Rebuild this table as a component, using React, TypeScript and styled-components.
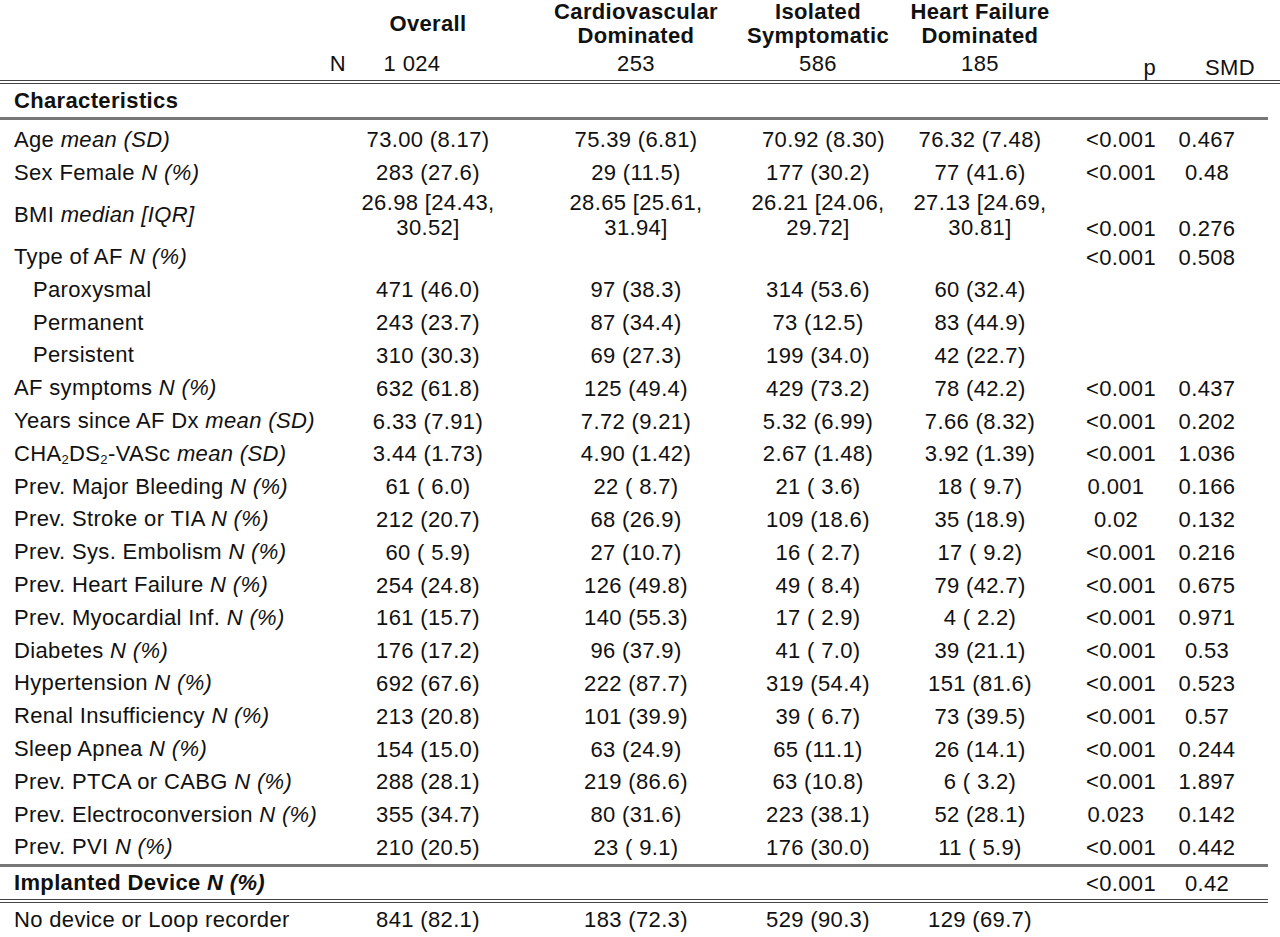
import React from 'react'
import styled, { createGlobalStyle } from 'styled-components'

const GlobalStyle = createGlobalStyle`
    html, body {
        margin: 0;
        padding: 0;
        background: #fff;
    }
`;

const BODY_COLS = '346px 164px 252px 112px 212px 60px 122px';
const HEAD_COLS = '346px 164px 252px 112px 212px 94px 100px';

const Page = styled.div`
    width: 1280px;
    font-family: "Liberation Sans", Arial, sans-serif;
    font-size: 22px;
    letter-spacing: 0.35px;
    color: #111;
`;

const Head = styled.header`
    border-bottom: 4px double #444;
`;

const TitleRow = styled.div`
    display: grid;
    grid-template-columns: ${HEAD_COLS};
    height: 48px;
`;

const Title = styled.div`
    display: flex;
    align-items: center;
    justify-content: center;
    text-align: center;
    font-weight: bold;
    line-height: 24px;
`;

const CountRow = styled.div`
    display: grid;
    grid-template-columns: ${HEAD_COLS};
    height: 32px;
    line-height: 32px;
`;

const Count = styled.div<{ $align?: string; $pad?: string; $low?: boolean }>`
    text-align: ${(p) => p.$align ?? 'center'};
    padding: ${(p) => p.$pad ?? '0'};
    transform: translateY(${(p) => (p.$low ? '4px' : '0')});
`;

const Section = styled.div<{ $double?: boolean; $w?: number }>`
    width: ${(p) => p.$w ?? 1268}px;
    border-bottom: ${(p) => (p.$double ? '4px double #444' : '3px solid #777')};
`;

const Body = styled.div`
    width: 1268px;
    padding-top: 3.6px;
    border-bottom: 3px solid #777;
`;

const Row = styled.div<{ $h?: number }>`
    display: grid;
    grid-template-columns: ${BODY_COLS};
    height: ${(p) => p.$h ?? 32.8}px;
    align-items: center;
    white-space: pre;
`;

const Label = styled.div<{ $indent?: boolean; $bold?: boolean }>`
    padding-left: ${(p) => (p.$indent ? 33 : 14)}px;
    font-weight: ${(p) => (p.$bold ? 'bold' : 'normal')};
`;

const Cell = styled.div<{ $bottom?: boolean }>`
    text-align: center;
    line-height: 25px;
    align-self: ${(p) => (p.$bottom ? 'end' : 'center')};
    padding-bottom: ${(p) => (p.$bottom ? 0 : 0)}px;
`;

const Stack = styled.div`
    display: flex;
    flex-direction: column;
    align-items: center;
    line-height: 25px;
`;

const I = styled.i`
    font-style: italic;
`;

const Sub = styled.sub`
    font-size: 13px;
    vertical-align: -3px;
    line-height: 0;
`;

type Line = {
    label: React.ReactNode
    indent?: boolean
    v?: (string | string[])[]
    p?: string
    smd?: string
}

const n = <I>N (%)</I>;

const lines: Line[] = [
    { label: <>Age <I>mean (SD)</I></>, v: ['73.00 (8.17)', '75.39 (6.81)', '70.92 (8.30)', '76.32 (7.48)'], p: '<0.001', smd: '0.467' },
    { label: <>Sex Female {n}</>, v: ['283 (27.6)', '29 (11.5)', '177 (30.2)', '77 (41.6)'], p: '<0.001', smd: '0.48' },
    {
        label: <>BMI <I>median [IQR]</I></>,
        v: [['26.98 [24.43,', '30.52]'], ['28.65 [25.61,', '31.94]'], ['26.21 [24.06,', '29.72]'], ['27.13 [24.69,', '30.81]']],
        p: '<0.001', smd: '0.276',
    },
    { label: <>Type of AF {n}</>, p: '<0.001', smd: '0.508' },
    { label: 'Paroxysmal', indent: true, v: ['471 (46.0)', '97 (38.3)', '314 (53.6)', '60 (32.4)'] },
    { label: 'Permanent', indent: true, v: ['243 (23.7)', '87 (34.4)', '73 (12.5)', '83 (44.9)'] },
    { label: 'Persistent', indent: true, v: ['310 (30.3)', '69 (27.3)', '199 (34.0)', '42 (22.7)'] },
    { label: <>AF symptoms {n}</>, v: ['632 (61.8)', '125 (49.4)', '429 (73.2)', '78 (42.2)'], p: '<0.001', smd: '0.437' },
    { label: <>Years since AF Dx <I>mean (SD)</I></>, v: ['6.33 (7.91)', '7.72 (9.21)', '5.32 (6.99)', '7.66 (8.32)'], p: '<0.001', smd: '0.202' },
    { label: <>CHA<Sub>2</Sub>DS<Sub>2</Sub>-VASc <I>mean (SD)</I></>, v: ['3.44 (1.73)', '4.90 (1.42)', '2.67 (1.48)', '3.92 (1.39)'], p: '<0.001', smd: '1.036' },
    { label: <>Prev. Major Bleeding {n}</>, v: ['61 ( 6.0)', '22 ( 8.7)', '21 ( 3.6)', '18 ( 9.7)'], p: '0.001', smd: '0.166' },
    { label: <>Prev. Stroke or TIA {n}</>, v: ['212 (20.7)', '68 (26.9)', '109 (18.6)', '35 (18.9)'], p: '0.02', smd: '0.132' },
    { label: <>Prev. Sys. Embolism {n}</>, v: ['60 ( 5.9)', '27 (10.7)', '16 ( 2.7)', '17 ( 9.2)'], p: '<0.001', smd: '0.216' },
    { label: <>Prev. Heart Failure {n}</>, v: ['254 (24.8)', '126 (49.8)', '49 ( 8.4)', '79 (42.7)'], p: '<0.001', smd: '0.675' },
    { label: <>Prev. Myocardial Inf. {n}</>, v: ['161 (15.7)', '140 (55.3)', '17 ( 2.9)', '4 ( 2.2)'], p: '<0.001', smd: '0.971' },
    { label: <>Diabetes {n}</>, v: ['176 (17.2)', '96 (37.9)', '41 ( 7.0)', '39 (21.1)'], p: '<0.001', smd: '0.53' },
    { label: <>Hypertension {n}</>, v: ['692 (67.6)', '222 (87.7)', '319 (54.4)', '151 (81.6)'], p: '<0.001', smd: '0.523' },
    { label: <>Renal Insufficiency {n}</>, v: ['213 (20.8)', '101 (39.9)', '39 ( 6.7)', '73 (39.5)'], p: '<0.001', smd: '0.57' },
    { label: <>Sleep Apnea {n}</>, v: ['154 (15.0)', '63 (24.9)', '65 (11.1)', '26 (14.1)'], p: '<0.001', smd: '0.244' },
    { label: <>Prev. PTCA or CABG {n}</>, v: ['288 (28.1)', '219 (86.6)', '63 (10.8)', '6 ( 3.2)'], p: '<0.001', smd: '1.897' },
    { label: <>Prev. Electroconversion {n}</>, v: ['355 (34.7)', '80 (31.6)', '223 (38.1)', '52 (28.1)'], p: '0.023', smd: '0.142' },
    { label: <>Prev. PVI {n}</>, v: ['210 (20.5)', '23 ( 9.1)', '176 (30.0)', '11 ( 5.9)'], p: '<0.001', smd: '0.442' },
];

const DataRow = ({ line }: { line: Line }) => {
    const tall = (line.v ?? []).some((x) => Array.isArray(x));
    const vals = line.v ?? ['', '', '', ''];
    return (
        <Row $h={tall ? 51.5 : undefined}>
            <Label $indent={line.indent}>{line.label}</Label>
            {vals.map((x, i) =>
                Array.isArray(x) ? (
                    <Stack key={i}>
                        {x.map((s) => <span key={s}>{s}</span>)}
                    </Stack>
                ) : (
                    <Cell key={i}>{x}</Cell>
                )
            )}
            <Cell $bottom={tall}>{line.p ?? ''}</Cell>
            <Cell $bottom={tall}>{line.smd ?? ''}</Cell>
        </Row>
    );
};

const App = () => {
    return (
        <Page>
            <GlobalStyle />
            <Head>
                <TitleRow>
                    <div />
                    <Title>Overall</Title>
                    <Title>Cardiovascular<br />Dominated</Title>
                    <Title>Isolated<br />Symptomatic</Title>
                    <Title>Heart Failure<br />Dominated</Title>
                </TitleRow>
                <CountRow>
                    <Count $align="right">N</Count>
                    <Count $pad="0 32px 0 0">1 024</Count>
                    <Count>253</Count>
                    <Count>586</Count>
                    <Count>185</Count>
                    <Count $align="right" $pad="0 24px 0 0" $low>p</Count>
                    <Count $low>SMD</Count>
                </CountRow>
            </Head>
            <Section>
                <Row $h={33}>
                    <Label $bold>Characteristics</Label>
                </Row>
            </Section>
            <Body>
                {lines.map((line, i) => <DataRow key={i} line={line} />)}
            </Body>
            <Section $double>
                <Row $h={32.5}>
                    <Label $bold>Implanted Device <I>N (%)</I></Label>
                    <Cell />
                    <Cell />
                    <Cell />
                    <Cell />
                    <Cell>&lt;0.001</Cell>
                    <Cell>0.42</Cell>
                </Row>
            </Section>
            <Row>
                <Label>No device or Loop recorder</Label>
                <Cell>841 (82.1)</Cell>
                <Cell>183 (72.3)</Cell>
                <Cell>529 (90.3)</Cell>
                <Cell>129 (69.7)</Cell>
                <Cell />
                <Cell />
            </Row>
        </Page>
    );
};

export default App;
